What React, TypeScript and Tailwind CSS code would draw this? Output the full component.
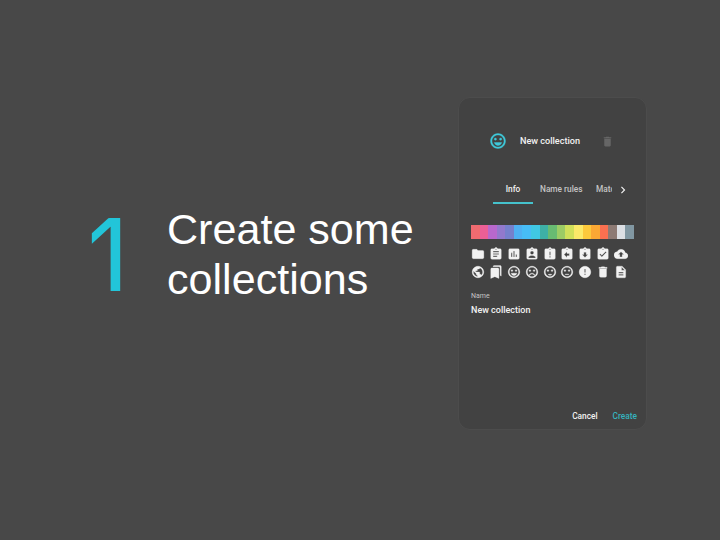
import {
  MdFolder, MdAssignment, MdAssessment, MdAssignmentInd, MdAssignmentLate, MdAssignmentReturn,
  MdAssignmentReturned, MdAssignmentTurnedIn, MdBackup, MdPublic, MdBookmarks,
  MdSentimentVerySatisfied, MdSentimentVeryDissatisfied, MdSentimentSatisfied, MdSentimentNeutral,
  MdError, MdDelete, MdDescription, MdChevronRight,
} from "react-icons/md";

const swatches = [
  "bg-[#ef6b70]", "bg-[#ec5f96]", "bg-[#b868cc]", "bg-[#9279cc]", "bg-[#7680cc]",
  "bg-[#4fb0f2]", "bg-[#47bdf6]", "bg-[#40c8e4]", "bg-[#3eb0a6]", "bg-[#68bb72]",
  "bg-[#9ccc65]", "bg-[#d0e05a]", "bg-[#fbe968]", "bg-[#fcc93c]", "bg-[#fba834]",
  "bg-[#fa7050]", "bg-[#8d7a74]", "bg-[#dcdfe4]", "bg-[#8197a2]",
];

const icons = [
  MdFolder, MdAssignment, MdAssessment, MdAssignmentInd, MdAssignmentLate, MdAssignmentReturn,
  MdAssignmentReturned, MdAssignmentTurnedIn, MdBackup,
  MdPublic, MdBookmarks, MdSentimentVerySatisfied, MdSentimentVeryDissatisfied, MdSentimentSatisfied,
  MdSentimentNeutral, MdError, MdDelete, MdDescription,
];

function CollectionDialog() {
  return (
    <section className="mt-[97px] ml-auto mr-[73px] flex h-[333px] w-[189px] flex-col rounded-[12px] border border-[#4c4c4c] bg-[#424242] font-['Roboto',sans-serif] text-[#f2f2f2]">
      <header className="mt-[34px] flex h-[18px] items-center pl-[30px]">
        <MdSentimentVerySatisfied className="size-[18px] stroke-current stroke-[0.5] text-[#3fc9da] [&_[fill=none]]:stroke-none" />
        <span className="ml-[13px] w-[80px] text-[9.1px] font-medium leading-[17px] whitespace-nowrap">New collection</span>
        <MdDelete className="ml-[1px] size-[13px] text-[#666666]" />
      </header>
      <nav className="mt-[26px] ml-[34px] flex h-[28px] items-start text-[8.3px] font-medium leading-[27px]">
        <span className="h-[28px] w-[40px] border-b-2 border-[#45c2cc] text-center">Info</span>
        <span className="ml-[7px] w-[56px] whitespace-nowrap text-[#c4c4c4]">Name rules</span>
        <span className="w-[16px] overflow-hidden text-[#c4c4c4]">Match</span>
        <MdChevronRight className="mt-[7px] ml-[4px] size-[14px]" />
      </nav>
      <div className="mt-[21px] ml-[12px] flex h-[14px] w-[163px]">
        {swatches.map((color) => <span key={color} className={`flex-1 ${color}`} />)}
      </div>
      <div className="mt-[8px] ml-[12px] grid w-[161px] grid-cols-9 gap-y-[4px]">
        {icons.map((Icon, i) => <Icon key={i} className="size-[14px] stroke-current stroke-[0.5] [&_[fill=none]]:stroke-none" />)}
      </div>
      <div className="mt-[12px] ml-[12px]">
        <div className="text-[7px] leading-[10px] text-[#c4c4c4]">Name</div>
        <div className="mt-[2px] text-[9px] font-medium leading-[14px]">New collection</div>
      </div>
      <footer className="mt-auto mr-[9px] mb-[6px] flex justify-end gap-[15px] text-[8.3px] font-medium leading-[14px]">
        <span>Cancel</span>
        <span className="text-[#35b3bf]">Create</span>
      </footer>
    </section>
  );
}

export default function App() {
  return (
    <main className="flex h-[540px] w-[720px] items-start overflow-hidden bg-[#484848]">
      <div className="mt-[202px] ml-[87px] w-[80px] [clip-path:inset(16px_0)]">
        <div className="h-[105px] origin-[33px_52px] -skew-y-[10deg] font-['Inter',sans-serif] text-[104px] leading-[105px] text-[#22c5d9]">1</div>
      </div>
      <h1 className="mt-[205px] w-[260px] font-['Liberation_Sans',Arial,sans-serif] text-[43.1px] leading-[49.5px] whitespace-nowrap text-white">
        Create some<br />collections
      </h1>
      <CollectionDialog />
    </main>
  );
}
